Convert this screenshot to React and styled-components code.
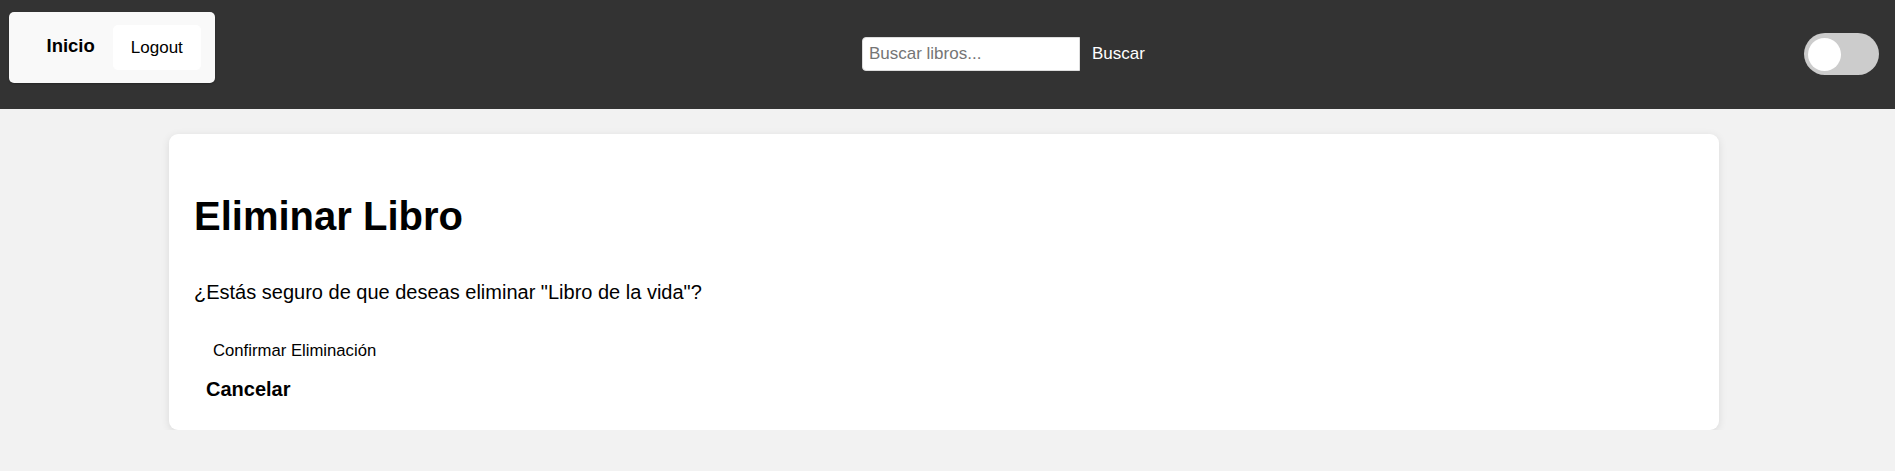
import React, { Component } from 'react';
import styled, { createGlobalStyle } from 'styled-components';

const GlobalStyle = createGlobalStyle`
  body{
    margin: 0;
    background-color: #f2f2f2;
    font-family: "Liberation Sans", Arial, sans-serif;
    color: #000;
  }
`

const Header = styled.header`
  height: 109px;
  box-sizing: border-box;
  background-color: #333;
  padding: 12px 16px 0 9px;
  display: flex;
  justify-content: space-between;
  align-items: flex-start;
`

const Nav = styled.nav`
  display: flex;
  align-items: flex-start;
  background-color: #f9f9f9;
  border-radius: 5px;
  padding: 13px 14px 13px 13px;
  box-shadow: 0 1px 2px rgba(0, 0, 0, 0.25);
`

const NavLink = styled.a`
  font-size: 18.5px;
  font-weight: bold;
  line-height: 21px;
  padding: 10px 18px 0 24.5px;
  color: #000;
  text-decoration: none;
`

const LogoutButton = styled.button`
  font-family: inherit;
  font-size: 17px;
  line-height: 20px;
  padding: 12.5px 18px;
  background-color: #fff;
  color: #000;
  border: none;
  border-radius: 5px;
  width: 88px;
`

const SearchForm = styled.form`
  display: flex;
  align-items: center;
  margin-top: 25px;
`

const SearchInput = styled.input`
  width: 218px;
  height: 34px;
  box-sizing: border-box;
  border: 1px solid #ddd;
  border-radius: 4px 0 0 4px;
  padding: 0 6px;
  font-family: inherit;
  font-size: 17px;
  &::placeholder{
    color: #757575;
  }
  &:focus{
    outline: 0;
  }
`

const SearchButton = styled.button`
  background: none;
  border: none;
  color: #fff;
  font-family: inherit;
  font-size: 17px;
  padding: 0 12px;
`

const Toggle = styled.button`
  width: 75px;
  height: 42px;
  margin-top: 21px;
  box-sizing: border-box;
  padding: 0 4.5px;
  border: none;
  border-radius: 21px;
  background-color: ${props => (props.on ? '#2196f3' : '#ccc')};
  display: flex;
  align-items: center;
  justify-content: ${props => (props.on ? 'flex-end' : 'flex-start')};
  .knob{
    width: 33px;
    height: 33px;
    border-radius: 50%;
    background-color: #fff;
  }
`

const Card = styled.main`
  width: 1550px;
  box-sizing: border-box;
  margin: 25px 0 0 169px;
  padding: 20px 24px 21px 25px;
  background-color: #fff;
  border-radius: 9px;
  box-shadow: 0 2px 8px rgba(0, 0, 0, 0.1);
  display: flex;
  flex-direction: column;
  align-items: flex-start;
`

const Title = styled.h1`
  font-size: 40px;
  line-height: 46px;
  font-weight: bold;
  margin: 39px 0 0;
`

const Question = styled.p`
  font-size: 20px;
  line-height: 23px;
  margin: 42px 0 0;
`

const ActionButton = styled.button`
  font-family: inherit;
  background: none;
  border: none;
  color: #000;
  cursor: pointer;
  font-size: ${props => (props.strong ? '20px' : '16.7px')};
  font-weight: ${props => (props.strong ? 'bold' : 'normal')};
  line-height: ${props => (props.strong ? '23px' : '20px')};
  padding: ${props => (props.strong ? '7px 12px 8px' : '10px 19px')};
  margin-top: ${props => (props.strong ? '0' : '27px')};
`

class App extends Component {
  state = {
    query: '',
    dark: false,
  }

  render() {
    const { query, dark } = this.state
    return (
      <>
        <GlobalStyle />
        <Header>
          <Nav>
            <NavLink href="#">Inicio</NavLink>
            <LogoutButton>Logout</LogoutButton>
          </Nav>
          <SearchForm onSubmit={(e) => e.preventDefault()}>
            <SearchInput
              placeholder="Buscar libros..."
              value={query}
              onChange={(e) => this.setState({ query: e.target.value })}
            />
            <SearchButton type="submit">Buscar</SearchButton>
          </SearchForm>
          <Toggle on={dark ? 1 : 0} onClick={() => this.setState({ dark: !dark })}>
            <span className="knob" />
          </Toggle>
        </Header>
        <Card>
          <Title>Eliminar Libro</Title>
          <Question>¿Estás seguro de que deseas eliminar "Libro de la vida"?</Question>
          <ActionButton>Confirmar Eliminación</ActionButton>
          <ActionButton strong>Cancelar</ActionButton>
        </Card>
      </>
    );
  }
}

export default App;
